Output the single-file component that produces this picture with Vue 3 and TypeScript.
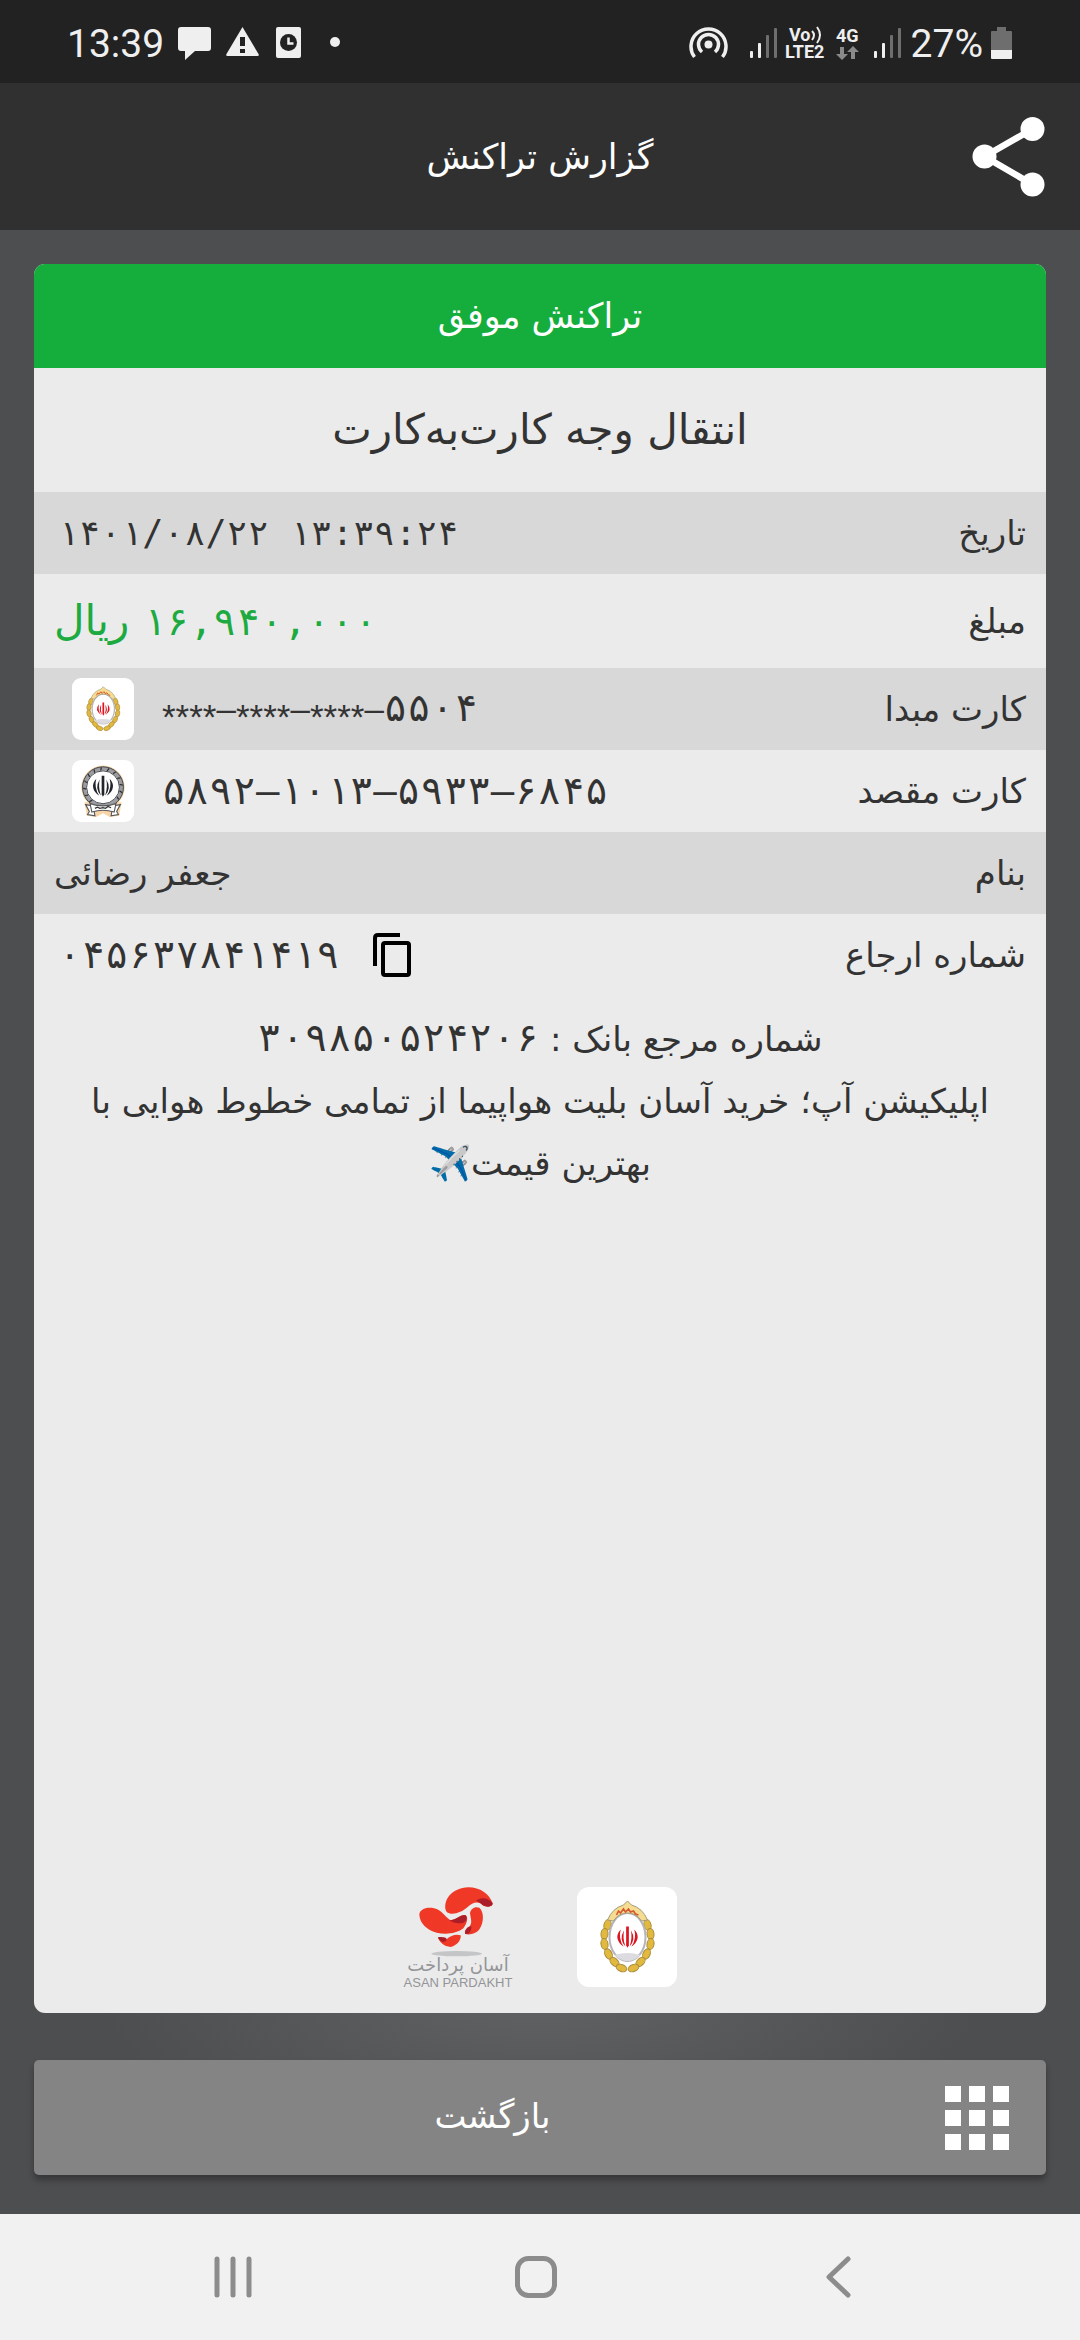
<script setup lang="ts">
interface Leaf {
  x: number
  y: number
  angle: number
}

const leaves: Leaf[] = [
  { x: -20, y: -12, angle: 15 },
  { x: -23, y: -3, angle: 5 },
  { x: -23, y: 7, angle: -10 },
  { x: -19, y: 17, angle: -25 },
  { x: -13, y: 25, angle: -45 },
  { x: -6, y: 31, angle: -70 },
]

const gridCells = [0, 1, 2, 3, 4, 5, 6, 7, 8]
const ringTicks = Array.from({ length: 13 }, (_, i) => 130 + i * 22)
</script>

<template>
  <div class="screen">
    <svg class="defs" width="0" height="0" aria-hidden="true">
      <defs>
        <g id="national">
          <path d="M-1.6 -13h3.200v22l-1.600 3l-1.600-3z" />
          <path d="M-4 -8.500Q-10.500 2 -2.500 10.500Q-6 1 -4 -8.500z" />
          <path d="M4 -8.500Q10.500 2 2.500 10.500Q6 1 4 -8.500z" />
          <path d="M-8 -9.500Q-17.500 1 -4.500 11Q-11 1 -8 -9.500z" />
          <path d="M8 -9.500Q17.500 1 4.500 11Q11 1 8 -9.500z" />
        </g>
        <symbol id="melli" viewBox="0 0 100 100">
          <g transform="translate(50.500 50)">
            <g fill="#e2b93f" stroke="#a98a3c" stroke-width="1">
              <g v-for="(leaf, i) in leaves" :key="i">
                <ellipse :transform="`translate(${leaf.x} ${leaf.y}) rotate(${leaf.angle})`" rx="3.5" ry="5.5" />
                <ellipse :transform="`translate(${-leaf.x} ${leaf.y}) rotate(${-leaf.angle})`" rx="3.5" ry="5.5" />
              </g>
            </g>
            <ellipse cy="0" rx="18" ry="24" fill="#fff" stroke="#b5b5bb" stroke-width="2" />
            <path d="M-13 18Q0 14 13 18Q7 24 0 24Q-7 24 -13 18z" fill="#dcdce0" />
            <path d="M-20 -17Q-15 -29 -4 -32L0 -36L4 -32Q15 -29 20 -17L14 -16Q9 -24 0 -24Q-9 -24 -14 -16z" fill="#f6dc91" stroke="#a39a7a" stroke-width="1" />
            <path d="M-11 -22l2 -4l2 2l3 -4l2 3l3 -3l2 3l3 -1l2 3l3 1" fill="none" stroke="#d8582e" stroke-width="1.6" />
            <use href="#national" fill="#dc1420" transform="translate(0 0.500) scale(0.850)" />
          </g>
        </symbol>
        <symbol id="sepah" viewBox="0 0 100 100">
          <circle cx="50" cy="44" r="35" fill="#f8d5a6" />
          <path d="M20 68L24 90L39 92L50 86L61 92L76 90L80 68z" fill="#f8d5a6" />
          <circle cx="50" cy="44" r="30" fill="#fff" stroke="#9a9ca0" stroke-width="6" />
          <circle cx="50" cy="44" r="33" fill="none" stroke="#3e4044" stroke-width="1.500" />
          <circle cx="50" cy="44" r="26.500" fill="none" stroke="#3e4044" stroke-width="1.500" />
          <g transform="translate(50 44)">
            <path v-for="a in ringTicks" :key="a" d="M27 0l5 2" stroke="#2d2f33" stroke-width="2" :transform="`rotate(${a})`" />
          </g>
          <use href="#national" fill="#22262c" transform="translate(50 43) scale(1.350)" />
          <g fill="#fff" stroke="#55575b" stroke-width="1.800">
            <path d="M22 72l12 2l3 16l-12 -2l3 -5z" />
            <path d="M78 72l-12 2l-3 16l12 -2l-3 -5z" />
            <path d="M29 70Q50 78 71 70L68 84Q50 78 32 84z" />
          </g>
          <path d="M37 78l4 -2l4 2l5 -1l4 1l4 -3l5 2" fill="none" stroke="#333" stroke-width="2" />
        </symbol>
      </defs>
    </svg>

    <div class="status">
      <div class="status-left">
        <span>13:39</span>
        <svg width="34" height="38" viewBox="180 24 34 38"><path fill="#efefef" d="M183 26h27q3 0 3 3v18q0 3-3 3h-13l-10 9v-9h-4q-3 0-3-3v-18q0-3 3-3z" /></svg>
        <svg width="34" height="38" viewBox="227 24 34 38"><path fill="#efefef" d="M243.500 26l16 27q1 2-1 2h-30q-2 0-1-2z" /><path fill="#222" d="M241 36h5v9h-5zM241 48h5v4h-5z" /></svg>
        <svg width="28" height="38" viewBox="276 24 28 38"><rect x="278" y="26" width="25" height="31" rx="2" fill="#efefef" /><circle cx="290.500" cy="41.500" r="8.500" fill="#222" /><path d="M290.500 36.500v6h5" fill="none" stroke="#efefef" stroke-width="2.500" /></svg>
        <svg width="28" height="38" viewBox="318 24 28 38"><circle cx="337" cy="41" r="5" fill="#efefef" /></svg>
      </div>
      <div class="status-right">
        <svg width="40" height="38" viewBox="687 24 40 38">
          <circle cx="706.500" cy="43.500" r="4" fill="#efefef" />
          <g fill="none" stroke="#efefef" stroke-width="3.500">
            <path d="M700 51a10 10 0 1 1 13 0" />
            <path d="M692.500 56a17.500 17.500 0 1 1 28 0" />
          </g>
        </svg>
        <svg width="40" height="38" viewBox="735 24 40 38"><g fill="#efefef"><rect x="748" y="50" width="3" height="7" rx="1" /><rect x="756" y="42" width="3" height="15" rx="1" /></g><g fill="#6e6e6e"><rect x="764" y="34" width="3" height="23" rx="1" /><rect x="772" y="27" width="3" height="30" rx="1" /></g></svg>
        <svg class="tiny" width="40" height="42" viewBox="783 22 40 42"><text x="787" y="40">Vo</text><text x="783" y="57">LTE2</text><path d="M810 30q4 4 0 9M815 26q6 8 0 16" fill="none" stroke="#efefef" stroke-width="2" /></svg>
        <svg class="tiny" width="28" height="38" viewBox="831 24 28 38"><text x="834" y="41">4G</text><path fill="#8a8a8a" d="M838 46h4v7h4l-6 6l-6-6h4zM849 58h4v-7h4l-6-6l-6 6h4z" /></svg>
        <svg width="34" height="38" viewBox="867 24 34 38"><g fill="#efefef"><rect x="872" y="50" width="3" height="7" rx="1" /><rect x="880" y="42" width="3" height="15" rx="1" /></g><g fill="#6e6e6e"><rect x="888" y="34" width="3" height="23" rx="1" /><rect x="896" y="27" width="3" height="30" rx="1" /></g></svg>
        <span>27%</span>
        <svg width="22" height="38" viewBox="991 24 22 38"><path fill="#6e6e6e" d="M997 26h9v4h5q1 0 1 1v18h-21v-18q0-1 1-1h5z" /><path fill="#efefef" d="M991 49h21v8q0 1-1 1h-19q-1 0-1-1z" /></svg>
      </div>
    </div>

    <header class="appbar">
      <h1>گزارش تراکنش</h1>
      <button class="share" type="button" aria-label="اشتراک‌گذاری">
        <svg width="74" height="80" viewBox="971 117 74 80" fill="#fff"><path d="M1032.500 129L984.500 156.500L1032.500 184.500" fill="none" stroke="#fff" stroke-width="6.500" /><circle cx="1032.500" cy="129" r="12" /><circle cx="984.500" cy="156.500" r="12" /><circle cx="1032.500" cy="184.500" r="12" /></svg>
      </button>
    </header>

    <main class="content">
      <section class="receipt">
        <div class="result">تراکنش موفق</div>
        <h2>انتقال وجه کارت‌به‌کارت</h2>
        <dl>
          <div class="row">
            <dt>تاریخ</dt>
            <dd dir="ltr" class="date">۱۴۰۱/۰۸/۲۲ ۱۳:۳۹:۲۴</dd>
          </div>
          <div class="row amount">
            <dt>مبلغ</dt>
            <dd><span class="num">۱۶,۹۴۰,۰۰۰</span> ریال</dd>
          </div>
          <div class="row">
            <dt>کارت مبدا</dt>
            <dd dir="ltr" class="card">
              <svg class="badge"><use href="#melli" /></svg>
              <span class="num"><span class="mask"><span class="stars">****</span>–<span class="stars">****</span>–<span class="stars">****</span>–</span>۵۵۰۴</span>
            </dd>
          </div>
          <div class="row">
            <dt>کارت مقصد</dt>
            <dd dir="ltr" class="card">
              <svg class="badge"><use href="#sepah" /></svg>
              <span class="num">۵۸۹۲–۱۰۱۳–۵۹۳۳–۶۸۴۵</span>
            </dd>
          </div>
          <div class="row">
            <dt>بنام</dt>
            <dd>جعفر رضائی</dd>
          </div>
          <div class="row">
            <dt>شماره ارجاع</dt>
            <dd dir="ltr" class="reference">
              <span class="num">۰۴۵۶۳۷۸۴۱۴۱۹</span>
              <button class="copy" type="button" aria-label="کپی">
                <svg width="40" height="46" viewBox="0 0 40 46" fill="none" stroke="#000" stroke-width="4"><path d="M28 3H6q-3 0-3 3v28" /><rect x="11" y="11" width="26" height="32" rx="2" /></svg>
              </button>
            </dd>
          </div>
        </dl>
        <div class="notes">
          <p>شماره مرجع بانک : <span class="num">۳۰۹۸۵۰۵۲۴۲۰۶</span></p>
          <p>اپلیکیشن آپ؛ خرید آسان بلیت هواپیما از تمامی خطوط هوایی با بهترین قیمت✈️</p>
        </div>
        <div class="logos" dir="ltr">
          <svg class="brand" width="110" height="100" viewBox="69 81 330 300">
            <g fill="#f03826">
              <path d="M197 150C190 120 215 84 265 82C300 82 328 102 338 130C338 140 325 142 312 138C295 122 280 125 262 142C245 158 215 168 200 156z" />
              <path d="M118 165C118 148 140 140 162 145C185 150 195 170 210 180C225 182 240 165 255 165C266 168 262 190 250 205C230 222 195 224 170 218C140 210 120 190 118 165z" />
              <path d="M270 160C272 145 285 138 298 143C312 155 312 185 300 205C292 220 270 226 256 222C252 214 258 204 268 200C278 190 272 175 270 160z" />
              <path d="M174 232C180 238 192 240 200 238C212 226 228 222 242 226C244 240 232 256 212 261C192 260 178 246 174 232z" />
            </g>
            <g fill="#ab1d28">
              <path d="M288 123C300 110 325 112 338 130C338 142 322 142 308 136C302 130 295 124 288 123z" />
              <path d="M208 181C225 182 240 164 255 165C264 170 260 185 250 188C238 191 220 190 208 181z" />
              <path d="M274 199C264 198 252 212 256 222C268 224 274 215 274 199z" />
              <path d="M174 232C186 230 200 232 200 238C200 244 195 246 188 246C178 242 174 236 174 232z" />
            </g>
            <ellipse cx="230" cy="281" rx="76" ry="8" fill="#c4c5c6" />
            <text class="brand-fa" x="234" y="332">آسان پرداخت</text>
            <text class="brand-en" x="234" y="381">ASAN PARDAKHT</text>
          </svg>
          <svg class="bank"><use href="#melli" /></svg>
        </div>
      </section>

      <button class="back" type="button">
        <svg width="64" height="64" viewBox="0 0 64 64" fill="#fff"><rect v-for="c in gridCells" :key="c" :x="(c % 3) * 24" :y="Math.floor(c / 3) * 24" width="16" height="16" /></svg>
        <span>بازگشت</span>
      </button>
    </main>

    <nav class="navbar">
      <button type="button" aria-label="Recents"><svg width="42" height="44" viewBox="0 0 42 44"><path d="M4 4v36M20 4v36M36 4v36" /></svg></button>
      <button type="button" aria-label="Home"><svg width="42" height="44" viewBox="0 0 42 44"><rect x="2.500" y="3.500" width="37" height="37" rx="11" /></svg></button>
      <button type="button" aria-label="Back"><svg width="42" height="44" viewBox="0 0 42 44"><path d="M31 4L12 22L31 40" /></svg></button>
    </nav>
  </div>
</template>

<style>
body {
  margin: 0;
}
</style>

<style scoped>
.screen {
  display: flex;
  flex-direction: column;
  min-height: 100vh;
  background: #4d4e50;
  color: #333;
  font: 34px "DejaVu Sans", sans-serif;
}
.defs {
  position: absolute;
}
svg {
  display: block;
  flex: none;
}
button {
  margin: 0;
  padding: 0;
  border: 0;
  background: none;
  color: inherit;
  font: inherit;
}
h1,
h2,
dl,
dd,
p {
  margin: 0;
  font-weight: 400;
}
.status {
  display: flex;
  justify-content: space-between;
  height: 83px;
  box-sizing: border-box;
  padding: 4px 67px 0;
  background: #222;
  color: #efefef;
  font: 39px Roboto, sans-serif;
}
.status-left,
.status-right {
  display: flex;
  align-items: center;
  gap: 14px;
}
.status-right {
  gap: 8px;
}
.tiny {
  overflow: visible;
  font: 700 18px Roboto, sans-serif;
  fill: #efefef;
}
.appbar {
  display: grid;
  grid-template-columns: 1fr auto 1fr;
  align-items: center;
  height: 147px;
  padding: 0 35px;
  background: #303030;
  color: #fff;
}
.appbar h1 {
  grid-column: 2;
  font-size: 35px;
}
.share {
  justify-self: end;
}
.content {
  display: flex;
  flex: 1;
  flex-direction: column;
  gap: 47px;
  padding: 34px 34px 39px;
  background: radial-gradient(440px 160px at 50% 89%, #616264, #4d4e50);
}
.receipt {
  display: flex;
  flex: 1;
  flex-direction: column;
  overflow: hidden;
  border-radius: 11px;
  background: #ebebeb;
  direction: rtl;
}
.result {
  background: #15ad3b;
  color: #fff;
  font-size: 35px;
  line-height: 104px;
  text-align: center;
}
h2 {
  font-size: 42px;
  line-height: 124px;
  text-align: center;
}
.row {
  display: flex;
  align-items: center;
  justify-content: space-between;
  min-height: 82px;
  padding: 0 20px;
}
.row:nth-child(odd) {
  background: #d8d8d8;
}
.row.amount {
  min-height: 94px;
}
dt,
.row > dd {
  line-height: 48px;
}
.num {
  font-family: "DejaVu Sans Mono", monospace;
  font-size: 39px;
}
.date {
  padding-left: 4px;
  font: 35px "DejaVu Sans Mono", monospace;
}
.amount dd {
  color: #1dab41;
  font-size: 42px;
}
.card {
  display: flex;
  align-items: center;
  gap: 28px;
  padding-left: 18px;
}
.badge {
  width: 62px;
  height: 62px;
  border-radius: 9px;
  background: #fff;
}
.mask {
  font-family: "Liberation Sans", sans-serif;
  font-size: 35px;
}
.stars {
  line-height: 1;
  vertical-align: sub;
}
.reference {
  display: flex;
  align-items: center;
  gap: 32px;
  padding-left: 4px;
}
.notes {
  padding: 12px 20px 0;
  line-height: 62px;
  text-align: center;
}
.notes .num {
  line-height: 1;
}
.logos {
  display: flex;
  align-items: center;
  justify-content: center;
  gap: 64px;
  margin-top: auto;
  padding-bottom: 26px;
}
.brand {
  overflow: visible;
}
.bank {
  width: 100px;
  height: 100px;
  border-radius: 12px;
  background: #fff;
}
.brand-fa {
  fill: #939598;
  font: 54px "DejaVu Sans", sans-serif;
  text-anchor: middle;
}
.brand-en {
  fill: #939598;
  font: 39px "Liberation Sans", sans-serif;
  text-anchor: middle;
}
.back {
  display: flex;
  align-items: center;
  gap: 24px;
  min-height: 115px;
  padding: 0 37px 0 30px;
  border-radius: 5px;
  background: #848484;
  box-shadow: 0 5px 6px rgba(0, 0, 0, 0.3);
  color: #fff;
  direction: rtl;
}
.back span {
  flex: 1;
  padding-bottom: 4px;
  font-size: 34px;
  text-align: center;
}
.navbar {
  display: flex;
  align-items: center;
  justify-content: space-between;
  height: 126px;
  padding: 0 221px 0 213px;
  background: #f1f1f1;
}
.navbar svg {
  fill: none;
  stroke: #8c8c8c;
  stroke-width: 5;
  stroke-linecap: round;
  stroke-linejoin: round;
}
</style>
